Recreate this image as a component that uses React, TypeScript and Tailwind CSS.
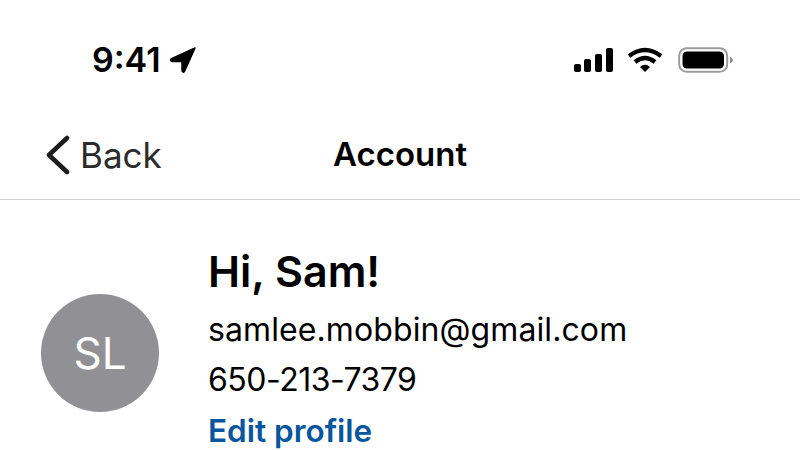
export default function App() {
  return (
    <div className="w-[800px] h-[450px] overflow-hidden bg-white text-black font-['Inter','Liberation_Sans',sans-serif]">
      <div className="h-[120px] flex items-center justify-between pl-[92px] pr-[66px]">
        <div className="flex items-center gap-[8px]">
          <span className="text-[34px] leading-none font-semibold">9:41</span>
          <svg width="28" height="28" viewBox="0 0 28 28">
            <path d="M26 2 L2 13 Q1 15 3 15.5 L13 15.5 L13 25 Q14 27 15.5 25.5 Z" fill="#000" stroke="#000" strokeWidth="1.5" strokeLinejoin="round" />
          </svg>
        </div>
        <div className="flex items-center gap-[13px]">
          <svg width="41" height="26" viewBox="0 0 41 26">
            <rect x="1" y="17" width="7" height="8" rx="2" />
            <rect x="11" y="12" width="7" height="13" rx="2" />
            <rect x="22" y="7" width="7" height="18" rx="2" />
            <rect x="33" y="1" width="7" height="24" rx="2" />
          </svg>
          <svg width="36" height="26" viewBox="0 0 36 26" fill="none">
            <path d="M2 9 Q18 -3 34 9" stroke="#000" strokeWidth="4.5" />
            <path d="M8 15 Q18 7 28 15" stroke="#000" strokeWidth="4.5" />
            <path d="M13 20 Q18 15.5 23 20 L18 25 Z" fill="#000" />
          </svg>
          <svg width="56" height="26" viewBox="0 0 56 26" className="ml-[2px]">
            <rect x="1.2" y="1.2" width="48" height="23.6" rx="7.5" fill="none" stroke="#9a9a9a" strokeWidth="2" />
            <rect x="4.5" y="4.5" width="41.5" height="17" rx="4.5" fill="#000" />
            <path d="M52 9.5 Q55 11 55 13 Q55 15 52 16.5 Z" fill="#8e8e8e" />
          </svg>
        </div>
      </div>
      <div className="relative h-[80px] border-b border-[#d1d1d1] flex items-center justify-center pb-[10px]">
        <div className="absolute left-[46px] top-[13px] flex items-center gap-[10px]">
          <svg width="24" height="40" viewBox="0 0 24 40" fill="none">
            <path d="M21 3 L3 20 L21 37" stroke="#1c1c1c" strokeWidth="4.5" strokeLinecap="round" strokeLinejoin="round" />
          </svg>
          <span className="text-[35px] leading-[44px] text-[#2b2b2b]">Back</span>
        </div>
        <span className="text-[33px] leading-none font-semibold">Account</span>
      </div>
      <div className="flex items-start gap-[49px] pl-[41px] pt-[46px]">
        <div className="w-[118px] h-[118px] mt-[48px] rounded-full bg-[#919195] flex items-center justify-center text-white text-[44px]">SL</div>
        <div className="flex flex-col items-start">
          <div className="text-[43px] leading-[50px] font-semibold">Hi, Sam!</div>
          <div className="text-[32px] leading-[50px] mt-[9px] tracking-[0.1px]">samlee.mobbin@gmail.com</div>
          <div className="text-[32px] leading-[50px] tracking-[-0.5px]">650-213-7379</div>
          <div className="text-[31.5px] leading-[50px] mt-[1px] font-semibold text-[#07569e]">Edit profile</div>
        </div>
      </div>
    </div>
  );
}
